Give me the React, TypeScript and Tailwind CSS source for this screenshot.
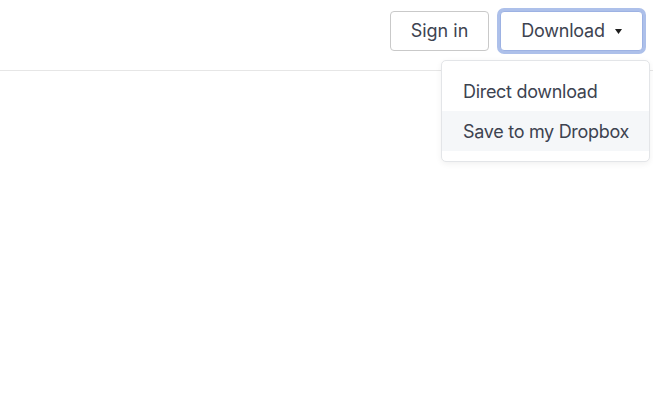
export default function App() {
  return (
    <div className="relative h-[400px] w-[653px] overflow-hidden bg-white font-['Inter',sans-serif] text-[#3d4350]">
      {/* Header */}
      <header className="flex h-[71px] items-start justify-end gap-[11px] border-b border-[#e6e6e6] pr-[10px] pt-[11px]">
        <button className="h-[40px] w-[99px] rounded-[4px] border border-[#c9c9c9] bg-white text-[18px] leading-none">
          Sign in
        </button>
        <button className="flex h-[40px] w-[143px] items-center justify-center gap-[10px] rounded-[4px] border border-[#9db2e3] bg-white text-[18px] leading-none tracking-[-0.2px] shadow-[0_0_0_3px_#adc0ea]">
          <span>Download</span>
          <svg width="7" height="5" viewBox="0 0 7 5" className="mt-[1px]">
            <path d="M0 0h7L3.5 5z" fill="#1e1e1e" />
          </svg>
        </button>
      </header>

      {/* Dropdown menu */}
      <div className="absolute left-[441px] top-[60px] w-[209px] rounded-[5px] border border-[#e3e5e8] bg-white pb-[10px] pt-[10px] shadow-[0_2px_6px_rgba(0,0,0,0.06)]">
        <div className="flex h-[40px] items-center whitespace-nowrap px-[21px] text-[18px] tracking-[-0.3px]">Direct download</div>
        <div className="flex h-[40px] items-center whitespace-nowrap bg-[#f5f7f9] px-[21px] text-[18px] tracking-[-0.3px]">Save to my Dropbox</div>
      </div>
    </div>
  )
}
